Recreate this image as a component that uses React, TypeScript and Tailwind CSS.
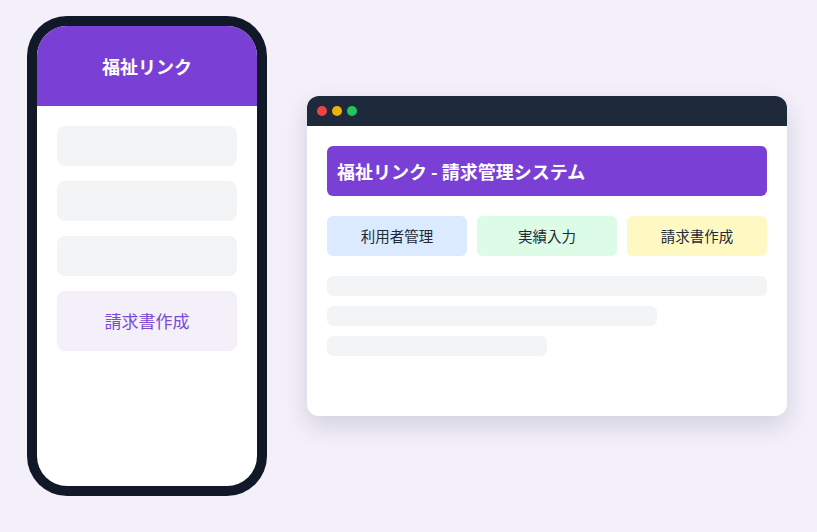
export default function App() {
  return (
    <div className="w-[817px] h-[532px] bg-[#f3f0fa] pt-4 pl-[27px] flex items-start">
      <div className="flex items-center gap-10 h-[480px] [font-family:'Noto_Sans_CJK_JP','Noto_Sans',sans-serif]">
        {/* Phone */}
        <div className="w-[240px] h-[480px] rounded-[40px] bg-[#111827] p-[10px]">
          <div className="w-full h-full rounded-[30px] bg-white overflow-hidden flex flex-col">
            <div className="h-[80px] bg-[#7a40d6] flex items-center justify-center">
              <span className="text-white font-bold text-[18px]">福祉リンク</span>
            </div>
            <div className="p-5 flex flex-col gap-[15px]">
              <div className="h-10 rounded-lg bg-[#f3f4f6]" />
              <div className="h-10 rounded-lg bg-[#f3f4f6]" />
              <div className="h-10 rounded-lg bg-[#f3f4f6]" />
              <div className="h-[60px] rounded-lg bg-[#f3f0fa] flex items-center justify-center">
                <span className="text-[#7d48d4] text-[17px]">請求書作成</span>
              </div>
            </div>
          </div>
        </div>

        {/* Browser window */}
        <div className="w-[480px] h-[320px] rounded-xl bg-white overflow-hidden shadow-[0_10px_25px_rgba(30,20,60,0.15)] flex flex-col">
          <div className="h-[30px] bg-[#1e293b] flex items-center gap-[5px] px-[10px]">
            <span className="w-[10px] h-[10px] rounded-full bg-[#ef4444]" />
            <span className="w-[10px] h-[10px] rounded-full bg-[#eab308]" />
            <span className="w-[10px] h-[10px] rounded-full bg-[#22c55e]" />
          </div>
          <div className="p-5 flex flex-col">
            <div className="h-[50px] rounded-md bg-[#7a40d6] flex items-center px-[10px]">
              <span className="text-white font-bold text-[18px]">福祉リンク - 請求管理システム</span>
            </div>
            <div className="mt-5 grid grid-cols-3 gap-[10px]">
              <div className="h-10 rounded-md bg-[#dbeafe] flex items-center justify-center text-[14.5px] text-[#1f2937]">利用者管理</div>
              <div className="h-10 rounded-md bg-[#dcfce7] flex items-center justify-center text-[14.5px] text-[#1f2937]">実績入力</div>
              <div className="h-10 rounded-md bg-[#fef9c3] flex items-center justify-center text-[14.5px] text-[#1f2937]">請求書作成</div>
            </div>
            <div className="mt-5 flex flex-col gap-[10px]">
              <div className="h-5 w-full rounded-md bg-[#f3f4f6]" />
              <div className="h-5 w-[330px] rounded-md bg-[#f3f4f6]" />
              <div className="h-5 w-[220px] rounded-md bg-[#f3f4f6]" />
            </div>
          </div>
        </div>
      </div>
    </div>
  );
}
